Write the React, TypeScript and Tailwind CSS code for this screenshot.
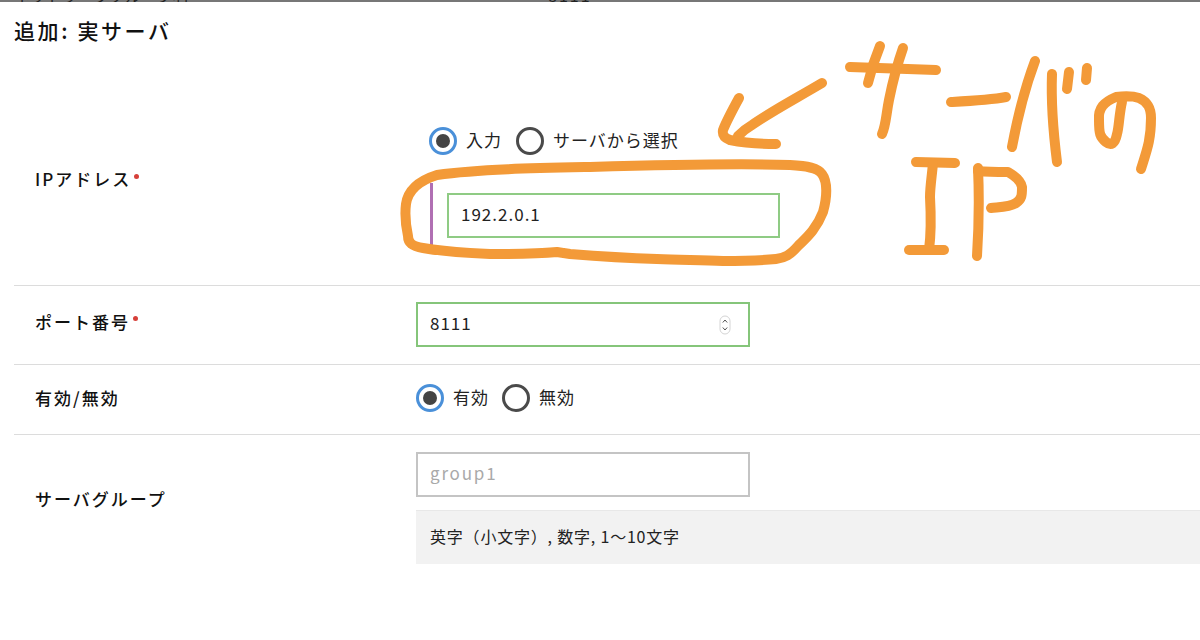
import React from "react";

const font = { fontFamily: '"Noto Sans CJK JP", "Noto Sans", sans-serif' };

const Radio = ({ label, checked }: { label: string; checked?: boolean }) => (
  <label className="flex items-center gap-[9px]">
    <span
      className={`flex items-center justify-center h-[28px] w-[28px] rounded-full border-[3px] ${
        checked ? "border-[#4a90d9]" : "border-[#4a4a4a]"
      }`}
    >
      {checked && <span className="h-[14px] w-[14px] rounded-full bg-[#444]" />}
    </span>
    <span className="mb-[3px] text-[17px] leading-[25px] tracking-[1px] text-[#222]">{label}</span>
  </label>
);

const Label = ({ text, required, className }: { text: string; required?: boolean; className?: string }) => (
  <div className={`w-[402px] pl-[21px] flex items-center shrink-0 text-[17px] tracking-[2px] font-medium text-[#111] ${className ?? ""}`}>
    <span>{text}</span>
    {required && <span className="ml-[3px] mb-[6px] h-[5px] w-[5px] rounded-full bg-[#d6403a]" />}
  </div>
);

// the hand-drawn annotation on top of the form
const Scribble = () => (
  <svg
    className="absolute left-0 top-0 pointer-events-none"
    width="1200"
    height="640"
    viewBox="0 0 1200 640"
    fill="none"
    stroke="#f39a38"
    strokeWidth="10"
    strokeLinecap="round"
    strokeLinejoin="round"
  >
    <path d="M437 175 C480 169 540 168 590 167 C660 165 730 163 790 165 C808 166 818 168 822 174 C828 182 827 198 823 212 C816 230 806 238 798 246 C790 255 785 258 776 259 C755 261 738 261 723 261 C700 260 680 260 657 259 C625 258 595 256 570 254 L557 252 C535 254 512 254 490 254 C465 253 440 251 423 248 C412 246 408 243 408 236 C405 222 405 212 406 204 C408 190 418 181 437 175 Z" />
    <path d="M822 83 C795 99 772 111 752 125 C745 129 742 132 738 136" />
    <path d="M739 98 C733 109 727 120 723 130 C722 136 725 138 730 140 C745 143 760 144 776 144" />
    <path d="M850 67 C880 68 910 69 936 70" />
    <path d="M880 46 C875 58 871 70 868 83" />
    <path d="M903 48 C897 65 892 85 889 100 C886 115 886 125 882 134" />
    <path d="M951 102 C970 101 990 100 1006 97" />
    <path d="M1035 61 C1026 85 1018 115 1012 147" />
    <path d="M1052 74 C1051 100 1053 130 1057 162" />
    <path d="M1069 72 L1067 89" />
    <path d="M1087 68 L1086 80" />
    <path d="M1122 102 C1119 115 1119 128 1117 134 C1115 144 1111 146 1106 142 C1100 137 1099 134 1099 120 C1098 108 1104 102 1116 97 C1125 96 1133 96 1139 98 C1148 102 1151 108 1151 118 C1151 140 1147 150 1141 169" />
    <path d="M916 162 L955 163" />
    <path d="M933 163 C932 175 930 187 930 197 C931 215 931 235 929 250" />
    <path d="M909 250 L944 250" />
    <path d="M978 168 C979 190 979 225 977 256" />
    <path d="M978 171 C988 172 1000 172 1008 172 C1015 176 1021 181 1022 187 C1022 195 1022 199 1016 203 C1010 207 1000 207 991 208" />
  </svg>
);

export default function App() {
  return (
    <div className="relative w-[1200px] h-[640px] overflow-hidden bg-white" style={font}>
      {/* previous screen's last row, cut off by the crop */}
      <div className="flex h-[2px] overflow-hidden bg-[#777] text-[16px] leading-[16px] text-[#222]">
        <span className="block w-[548px] shrink-0 pl-[14px] -mt-[13px]">ネットワークグループ名</span>
        <span className="block w-[166px] shrink-0 -mt-[13px] tracking-[2px]">8111</span>
        <span className="block -mt-[13px]">-</span>
      </div>

      <div className="h-[71px] pl-[14px] pt-[13px] text-[21px] leading-[30px] tracking-[2.6px] font-medium text-[#111]">
        追加: 実サーバ
      </div>

      <div className="ml-[14px]">
        <div className="flex h-[213px] border-b border-[#dcdcdc]">
          <Label text="IPアドレス" required />
          <div className="pt-[54px]">
            <div className="flex gap-[14px] ml-[13px]">
              <Radio label="入力" checked />
              <Radio label="サーバから選択" />
            </div>
            <div className="mt-[28px] ml-[14px] py-[10px] pl-[14px] border-l-[3px] border-[#b06fb3]">
              <div className="w-[333px] h-[45px] border-2 border-[#8fcb84]">
                <input
                  readOnly
                  value="192.2.0.1"
                  className="block w-full h-full px-[12px] pb-[4px] text-[17px] tracking-[1px] text-[#222] outline-none"
                />
              </div>
            </div>
          </div>
        </div>

        <div className="flex h-[79px] border-b border-[#dcdcdc]">
          <Label text="ポート番号" required className="pb-[7px]" />
          <div className="relative mt-[16px] h-[45px] w-[334px]">
            <input
              readOnly
              value="8111"
              className="block w-full h-full px-[12px] pb-[5px] border-2 border-[#85c57a] text-[17px] tracking-[1px] text-[#222] outline-none"
            />
            <svg className="absolute left-[303px] top-[13px]" width="12" height="20" viewBox="0 0 12 20" fill="none">
              <rect x="1" y="1" width="10" height="18" rx="5" fill="#fff" stroke="#d4d4d4" />
              <path d="M3.8 7.5 6 5 8.2 7.5M3.8 12.5 6 15 8.2 12.5" stroke="#555" strokeWidth="1" />
            </svg>
          </div>
        </div>

        <div className="flex h-[70px] items-center border-b border-[#dcdcdc]">
          <Label text="有効/無効" className="pb-[4px]" />
          <div className="flex gap-[13px] pb-[4px]">
            <Radio label="有効" checked />
            <Radio label="無効" />
          </div>
        </div>

        <div className="flex h-[130px]">
          <Label text="サーバグループ" className="pb-[2px]" />
          <div className="flex-1 pt-[17px]">
            <input
              readOnly
              placeholder="group1"
              className="block w-[334px] h-[45px] px-[12px] pb-[4px] border-2 border-[#c4c4c4] text-[17px] tracking-[1.8px] placeholder:text-[#a9a9a9] outline-none"
            />
            <div className="mt-[13px] h-[54px] flex items-center pl-[14px] pb-[4px] bg-[#f2f2f2] border-t border-[#e8e8e8] text-[16px] tracking-[0.8px] text-[#222]">
              英字（小文字）, 数字, 1〜10文字
            </div>
          </div>
        </div>
      </div>

      <Scribble />
    </div>
  );
}
